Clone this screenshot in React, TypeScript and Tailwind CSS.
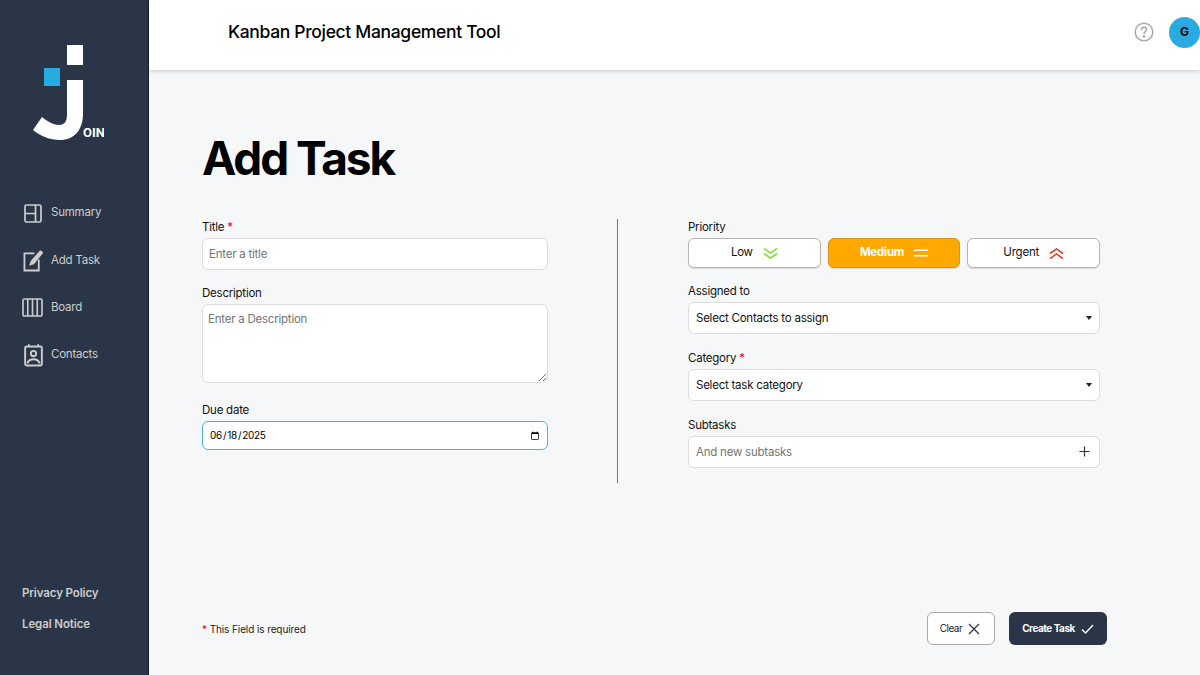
import { ReactNode } from 'react'

const navItems = [
  {
    label: 'Summary',
    icon: (
      <svg viewBox="0 0 18 19" className="ml-[2px] w-[18px] h-[19px]" fill="none" stroke="#cdcdcd" strokeWidth="1.7">
        <rect x="1" y="1" width="16" height="17" rx="1.5" />
        <path d="M11.500 1v17M1 9.500h10.500" />
      </svg>
    ),
  },
  {
    label: 'Add Task',
    icon: (
      <svg viewBox="0 0 22 24" className="ml-[1px] w-[21px] h-[23px]" fill="none" stroke="#cdcdcd" strokeWidth="1.900">
        <path d="M12 4.500H1.500v18h15V11" />
        <path d="M6.500 17.500l1.500-5L17.500 1.800c1-1 4 .8 3.200 2.800L11.500 16z" fill="#cdcdcd" stroke="none" />
      </svg>
    ),
  },
  {
    label: 'Board',
    icon: (
      <svg viewBox="0 0 22 20" className="w-[21px] h-[19px]" fill="none" stroke="#cdcdcd" strokeWidth="1.700">
        <rect x="1" y="1" width="20" height="18" rx="1.500" />
        <path d="M6 1v18M11 1v18M16 1v18" />
      </svg>
    ),
  },
  {
    label: 'Contacts',
    icon: (
      <svg viewBox="0 0 20 24" className="ml-[2px] w-[19px] h-[24px]" fill="none" stroke="#cdcdcd" strokeWidth="2">
        <rect x="1.200" y="3" width="17.600" height="20" rx="1.500" />
        <path d="M5 0.500V3M15 0.500V3" strokeWidth="1.500" />
        <circle cx="10" cy="10.500" r="2.800" />
        <path d="M3.500 21c1-3.500 3.500-4.500 6.500-4.500s5.500 1 6.500 4.500" />
      </svg>
    ),
  },
]

function Field({ label, required, children }: { label: string; required?: boolean; children: ReactNode }) {
  return (
    <div className="flex flex-col">
      <label className="text-[11.5px] tracking-[-0.02em] leading-[15px] text-[#111] pt-[1px] mb-[3px]">
        {label}
        {required && <span className="text-red-600"> *</span>}
      </label>
      {children}
    </div>
  )
}

function PriorityButton({ label, active, children }: { label: string; active?: boolean; children: ReactNode }) {
  return (
    <button
      className={`flex-1 h-[30px] rounded-[6px] border flex items-center justify-center gap-[10px] text-[11.5px] tracking-[-0.02em] shadow-[0_1px_1px_rgba(0,0,0,0.12)] ${
        active ? 'bg-[#ffa800] border-[#d9950f] text-white font-bold' : 'bg-white border-[#b5b5b5] text-[#111]'
      }`}
    >
      {label}
      {children}
    </button>
  )
}

function SelectBox({ text }: { text: string }) {
  return (
    <div className="relative">
      <select className="w-full h-[32px] appearance-none bg-white border border-[#dcdcdc] rounded-[6px] px-[7px] pt-[2px] text-[11.5px] tracking-[-0.02em] text-[#111] outline-none">
        <option>{text}</option>
      </select>
      <span className="absolute right-[8px] top-[14px] w-0 h-0 border-x-[3px] border-x-transparent border-t-[4px] border-t-[#222]" />
    </div>
  )
}

export default function App() {
  const inputClass =
    'w-full bg-white border border-[#dcdcdc] rounded-[6px] text-[11.5px] tracking-[-0.02em] outline-none placeholder:text-[#757575]'

  return (
    <div className="w-[1200px] h-[675px] flex overflow-hidden bg-[#f6f7f8] font-['Inter',sans-serif]">
      {/* Sidebar */}
      <aside className="w-[149px] shrink-0 bg-[#2a3647] border-r border-[#1a1f27] flex flex-col">
        <div className="h-[96px] mt-[45px] ml-[33px]">
          <svg viewBox="0 0 71 96" className="w-[71px] h-[96px]">
            <rect x="11" y="23" width="16" height="18" fill="#29abe2" />
            <rect x="34" y="0" width="16" height="20" fill="#fff" />
            <path d="M34 35h16v34c0 16-9 26-23 26-10 0-20-4-27-10l9-13c5 4 11 8 17 8 6 0 8-4 8-11z" fill="#fff" />
            <text x="50" y="92" fontSize="13" fontWeight="700" fill="#fff" fontFamily="Roboto, sans-serif">OIN</text>
          </svg>
        </div>

        <nav className="mt-[60px] flex flex-col gap-[23.330px] pl-[22px]">
          {navItems.map((item) => (
            <a key={item.label} className="h-[24px] flex items-center text-[11.5px] tracking-[-0.02em] text-[#cdcdcd]">
              <span className="w-[29px] flex items-center justify-start">{item.icon}</span>
              {item.label}
            </a>
          ))}
        </nav>

        <div className="mt-auto mb-[43px] pl-[22px] flex flex-col gap-[16px] text-[11.5px] tracking-[-0.01em] leading-[15px] font-semibold text-[#cdcdcd]">
          <a>Privacy Policy</a>
          <a>Legal Notice</a>
        </div>
      </aside>

      <div className="flex-1 flex flex-col">
        {/* Header */}
        <header className="h-[70px] shrink-0 bg-white shadow-[0_1px_4px_rgba(0,0,0,0.2)] flex items-center pl-[79px] z-10">
          <span className="text-[17.500px] tracking-[-0.33px] font-medium text-black -mt-[5px]">Kanban Project Management Tool</span>
          <div className="ml-auto flex items-center gap-[15px] -mt-[6px]">
            <svg viewBox="0 0 20 20" className="w-[20px] h-[20px]" fill="none" stroke="#a8a8a8" strokeWidth="1.500">
              <circle cx="10" cy="10" r="8.800" />
              <path d="M7.500 7.800c0-1.500 1.100-2.500 2.600-2.500s2.500 1 2.500 2.300c0 2-2.600 2-2.600 4.200" strokeLinecap="round" />
              <circle cx="10" cy="14.500" r="0.600" fill="#a8a8a8" />
            </svg>
            <div className="w-[31px] h-[31px] rounded-full bg-[#29abe2] flex items-center justify-center text-[12px] font-bold text-black">
              G
            </div>
          </div>
        </header>

        {/* Main */}
        <main className="flex-1 flex flex-col pl-[53px] pr-[93px] pb-[30px]">
          <h1 className="mt-[59px] text-[46px] tracking-[-2.060px] leading-[58px] font-bold text-black">Add Task</h1>

          <div className="mt-[32px] flex">
            <div className="w-[346px] flex flex-col">
              <div className="mb-[15px]">
                <Field label="Title" required>
                  <input placeholder="Enter a title" className={`${inputClass} h-[32px] px-[6px]`} />
                </Field>
              </div>
              <div className="mb-[19px]">
                <Field label="Description">
                  <textarea placeholder="Enter a Description" className={`${inputClass} h-[79px] px-[5px] py-[6px] block`} />
                </Field>
              </div>
              <Field label="Due date">
                <input
                  type="date"
                  defaultValue="2025-06-18"
                  className="w-full h-[29px] bg-white border border-[#4fb0cf] rounded-[6px] text-[10px] tracking-[-0.3px] pl-[6px] pr-[5px] outline-none"
                />
              </Field>
            </div>

            <div className="w-px h-[264px] bg-[#6f7780] ml-[69px] mr-[70px]" />

            <div className="w-[412px] flex flex-col">
              <div className="mb-[15px]">
                <Field label="Priority">
                  <div className="flex gap-[7px]">
                    <PriorityButton label="Low">
                      <svg viewBox="0 0 16 14" className="w-[15px] h-[13px]" fill="none" stroke="#7ae229" strokeWidth="1.700">
                        <path d="M1 1.500l7 5 7-5M1 7l7 5 7-5" />
                      </svg>
                    </PriorityButton>
                    <PriorityButton label="Medium" active>
                      <svg viewBox="0 0 14 8" className="w-[14px] h-[8px]" fill="none" stroke="#fff" strokeWidth="1.600">
                        <path d="M0 1.200h14M0 6.800h14" />
                      </svg>
                    </PriorityButton>
                    <PriorityButton label="Urgent">
                      <svg viewBox="0 0 16 14" className="w-[15px] h-[13px]" fill="none" stroke="#e8391f" strokeWidth="1.700">
                        <path d="M1 7l7-5 7 5M1 12.500l7-5 7 5" />
                      </svg>
                    </PriorityButton>
                  </div>
                </Field>
              </div>
              <div className="mb-[16px]">
                <Field label="Assigned to">
                  <SelectBox text="Select Contacts to assign" />
                </Field>
              </div>
              <div className="mb-[16px]">
                <Field label="Category" required>
                  <SelectBox text="Select task category" />
                </Field>
              </div>
              <Field label="Subtasks">
                <div className="relative">
                  <input placeholder="And new subtasks" className={`${inputClass} h-[32px] px-[7px]`} />
                  <svg viewBox="0 0 12 12" className="absolute right-[10px] top-[10px] w-[11px] h-[11px]" fill="none" stroke="#333" strokeWidth="1.300">
                    <path d="M6 0.500v11M0.500 6h11" />
                  </svg>
                </div>
              </Field>
            </div>
          </div>

          {/* Footer */}
          <div className="mt-auto flex items-center">
            <p className="text-[10px] tracking-[-0.01em] text-[#222] mt-[1px]">
              <span className="text-red-600">*</span> This Field is required
            </p>
            <div className="ml-auto flex gap-[14px]">
              <button className="w-[68px] h-[33px] pr-[2px] rounded-[6px] border border-[#a8a8a8] bg-white flex items-center justify-center gap-[6px] text-[10px] tracking-[-0.05em] text-[#222]">
                Clear
                <svg viewBox="0 0 12 12" className="w-[12px] h-[12px]" fill="none" stroke="#2a3647" strokeWidth="1.200">
                  <path d="M1 1l10 10M11 1L1 11" />
                </svg>
              </button>
              <button className="w-[98px] h-[33px] rounded-[6px] bg-[#2a3647] flex items-center justify-center gap-[6px] text-[10px] tracking-[-0.05em] font-bold text-white">
                Create Task
                <svg viewBox="0 0 13 10" className="w-[13px] h-[10px]" fill="none" stroke="#fff" strokeWidth="1.300">
                  <path d="M1 5.500l3.500 3.500L12 1" />
                </svg>
              </button>
            </div>
          </div>
        </main>
      </div>
    </div>
  )
}
